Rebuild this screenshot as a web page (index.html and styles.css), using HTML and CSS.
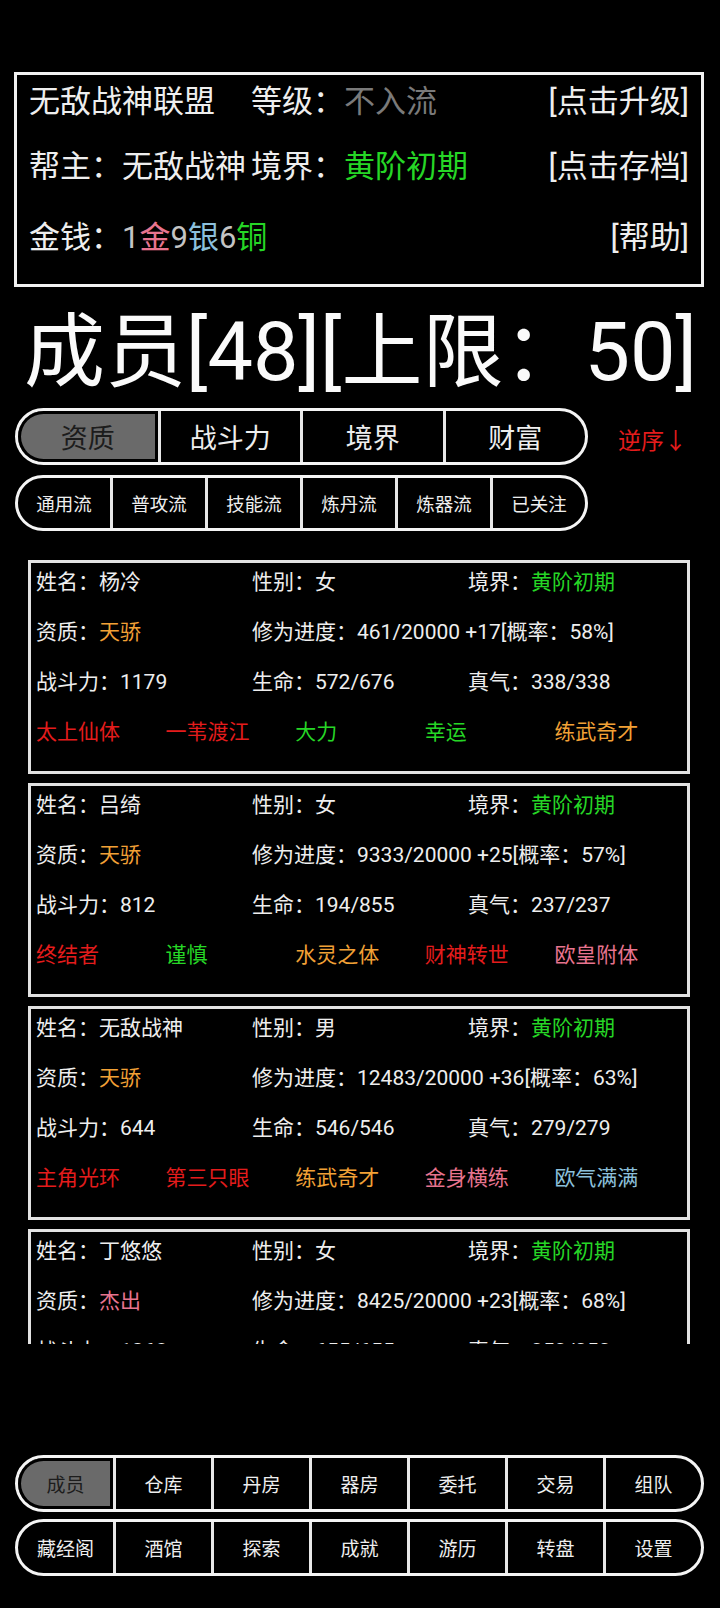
FILE: index.html
```html
<!DOCTYPE html>
<html lang="zh-CN">
<head>
<meta charset="utf-8">
<title>帮派成员</title>
<link rel="stylesheet" href="styles.css">
</head>
<body>
<div class="page">
  <section class="info">
    <div class="info-row r1">
      <div><span class="lead">无敌战神联盟</span>等级：<span class="gray">不入流</span></div>
      <div>[点击升级]</div>
    </div>
    <div class="info-row r2">
      <div><span class="lead">帮主：无敌战神</span>境界：<span class="green">黄阶初期</span></div>
      <div>[点击存档]</div>
    </div>
    <div class="info-row r3">
      <div>金钱：<span class="num">1</span><span class="pink">金</span><span class="num">9</span><span class="blue">银</span><span class="num">6</span><span class="green">铜</span></div>
      <div>[帮助]</div>
    </div>
  </section>

  <h1 class="title">成员[48][上限：50]</h1>

  <div class="sort-row">
    <div class="pill sort">
      <div class="seg on">资质</div>
      <div class="seg">战斗力</div>
      <div class="seg">境界</div>
      <div class="seg">财富</div>
    </div>
    <div class="order">逆序↓</div>
  </div>

  <div class="pill filter">
    <div class="seg">通用流</div>
    <div class="seg">普攻流</div>
    <div class="seg">技能流</div>
    <div class="seg">炼丹流</div>
    <div class="seg">炼器流</div>
    <div class="seg">已关注</div>
  </div>

  <div class="list">
    <div class="card">
      <div>姓名：杨冷</div><div>性别：女</div><div>境界：<span class="green">黄阶初期</span></div>
      <div>资质：<span class="orange">天骄</span></div><div class="span2">修为进度：461/20000 +17[概率：58%]</div>
      <div>战斗力：1179</div><div>生命：572/676</div><div>真气：338/338</div>
      <div class="traits"><span class="red">太上仙体</span><span class="red">一苇渡江</span><span class="green">大力</span><span class="green">幸运</span><span class="orange">练武奇才</span></div>
    </div>
    <div class="card">
      <div>姓名：吕绮</div><div>性别：女</div><div>境界：<span class="green">黄阶初期</span></div>
      <div>资质：<span class="orange">天骄</span></div><div class="span2">修为进度：9333/20000 +25[概率：57%]</div>
      <div>战斗力：812</div><div>生命：194/855</div><div>真气：237/237</div>
      <div class="traits"><span class="red">终结者</span><span class="green">谨慎</span><span class="orange">水灵之体</span><span class="red">财神转世</span><span class="pink">欧皇附体</span></div>
    </div>
    <div class="card">
      <div>姓名：无敌战神</div><div>性别：男</div><div>境界：<span class="green">黄阶初期</span></div>
      <div>资质：<span class="orange">天骄</span></div><div class="span2">修为进度：12483/20000 +36[概率：63%]</div>
      <div>战斗力：644</div><div>生命：546/546</div><div>真气：279/279</div>
      <div class="traits"><span class="red">主角光环</span><span class="red">第三只眼</span><span class="orange">练武奇才</span><span class="pink">金身横练</span><span class="blue">欧气满满</span></div>
    </div>
    <div class="card">
      <div>姓名：丁悠悠</div><div>性别：女</div><div>境界：<span class="green">黄阶初期</span></div>
      <div>资质：<span class="pink">杰出</span></div><div class="span2">修为进度：8425/20000 +23[概率：68%]</div>
      <div>战斗力：1268</div><div>生命：655/655</div><div>真气：353/353</div>
      <div class="traits"><span class="red">天煞孤星</span><span class="green">坚韧</span><span class="orange">木灵之体</span><span class="pink">福星高照</span><span class="blue">心灵手巧</span></div>
    </div>
  </div>

  <nav class="pill nav nav1">
    <div class="seg on">成员</div>
    <div class="seg">仓库</div>
    <div class="seg">丹房</div>
    <div class="seg">器房</div>
    <div class="seg">委托</div>
    <div class="seg">交易</div>
    <div class="seg">组队</div>
  </nav>
  <nav class="pill nav nav2">
    <div class="seg">藏经阁</div>
    <div class="seg">酒馆</div>
    <div class="seg">探索</div>
    <div class="seg">成就</div>
    <div class="seg">游历</div>
    <div class="seg">转盘</div>
    <div class="seg">设置</div>
  </nav>
</div>
</body>
</html>
```

FILE: styles.css
```css
* {
  box-sizing: border-box;
  margin: 0;
  padding: 0;
}

html, body {
  background: #000;
}

body {
  width: 720px;
  height: 1608px;
  overflow: hidden;
  font-family: Roboto, "Noto Sans CJK SC", sans-serif;
  color: #eeeeee;
}

.page {
  padding-top: 72px;
}

/* colours */
.gray { color: #7a7a7a; }
.green { color: #26d626; }
.red { color: #e41c1c; }
.orange { color: #f2a136; }
.pink { color: #e8748f; }
.blue { color: #8cc0dc; }
.num { color: #c4c4c4; }

/* top info box */
.info {
  margin-left: 14px;
  width: 690px;
  height: 215px;
  border: 3px solid #f2f2f2;
  padding: 0 12px 0 12px;
  font-size: 31px;
}

.info-row {
  display: flex;
  justify-content: space-between;
  align-items: center;
  white-space: nowrap;
  line-height: 40px;
}

.r1 { height: 54px; }
.r2 { height: 76px; }
.r3 { height: 66px; }

.lead {
  display: inline-block;
  width: 222px;
}

/* big title */
.title {
  height: 121px;
  padding: 12px 0 0 24px;
  font-size: 81px;
  font-weight: 400;
  line-height: 107px;
  white-space: nowrap;
  color: #fafafa;
}

/* pills */
.pill {
  display: flex;
  border: 3px solid #f4f4f4;
  background: #000;
  overflow: hidden;
  white-space: nowrap;
}

.seg {
  flex: 1 1 0;
  display: flex;
  align-items: center;
  justify-content: center;
}

.seg + .seg {
  border-left: 3px solid #e8e8e8;
}

.seg.on {
  background: #6a6a6a;
  color: #1c1c1c;
  box-shadow: inset 0 0 0 3px #000;
}

.sort-row {
  display: flex;
  align-items: center;
  height: 57px;
}

.sort {
  margin-left: 15px;
  width: 573px;
  height: 57px;
  border-radius: 29px;
  font-size: 27px;
}

.sort .seg.on {
  border-radius: 26px 0 0 26px;
}

.order {
  margin-left: 30px;
  font-size: 23px;
  color: #e41c1c;
  margin-top: 4px;
}

.filter {
  margin-top: 10px;
  margin-left: 15px;
  width: 573px;
  height: 56px;
  border-radius: 28px;
  font-size: 18.5px;
}

/* member list */
.list {
  margin-top: 14px;
  height: 799px;
  overflow: hidden;
  padding: 15px 0 0 28px;
}

.card {
  width: 662px;
  height: 214px;
  margin-bottom: 9px;
  border: 3px solid #e2e2e2;
  padding: 0 4px 0 5px;
  display: grid;
  grid-template-columns: 216px 216px 216px;
  grid-auto-rows: 38px;
  row-gap: 12px;
  align-items: center;
  font-size: 21px;
  line-height: 30px;
  white-space: nowrap;
}

.span2 {
  grid-column: span 2;
}

.traits {
  grid-column: span 3;
  display: grid;
  grid-template-columns: repeat(5, 129.6px);
}

/* bottom navigation */
.nav {
  margin-left: 15px;
  width: 689px;
  height: 57px;
  border-radius: 29px;
  font-size: 19px;
}

.nav .seg.on {
  border-radius: 26px 0 0 26px;
}

.nav1 {
  margin-top: 111px;
}

.nav2 {
  margin-top: 7px;
}
```
